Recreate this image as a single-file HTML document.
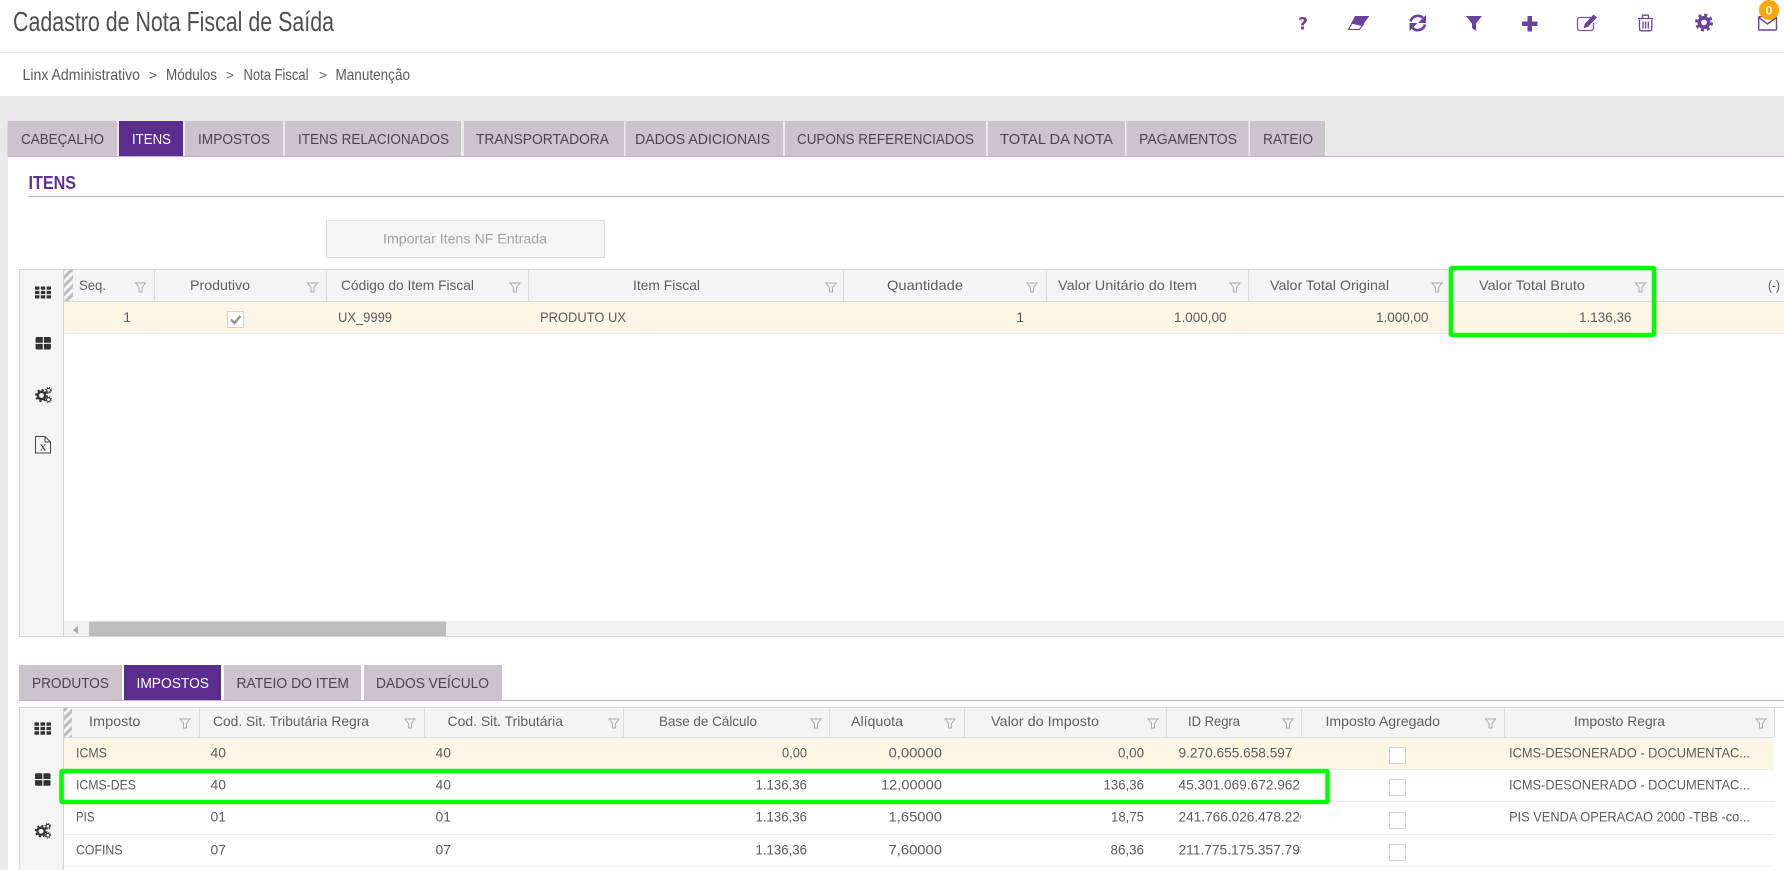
<!DOCTYPE html>
<html lang="pt"><head><meta charset="utf-8"><title>Cadastro de Nota Fiscal de Saída</title>
<style>
html,body{margin:0;padding:0;width:1784px;height:870px;overflow:hidden;background:#fff}
svg{display:block}
text{font-family:"Liberation Sans",sans-serif;fill:#5c5c5c;font-size:14px}
.t{font-size:15px;fill:#4a464e}
.bc{font-size:16px;fill:#5a5a5a}
.h{font-size:14px;fill:#5f5f5f}
.ic{fill:#6a439e}
</style></head><body>
<svg xmlns="http://www.w3.org/2000/svg" width="1784" height="870" viewBox="0 0 1784 870">
<defs>
<pattern id="st" width="6" height="6" patternUnits="userSpaceOnUse" patternTransform="rotate(-45)"><rect width="6" height="6" fill="#f4f4f4"/><rect width="6" height="3" fill="#bdbdbd"/></pattern>
<symbol id="f" viewBox="0 0 13 13" overflow="visible"><path d="M1.500 2H11.500L8 6.500V11H5V6.500Z" fill="none" stroke="#ababab" stroke-width="1"/></symbol>
<symbol id="grid" viewBox="0 0 16 12"><path fill="#333" d="M0 0h4.400v3.300H0zM5.800 0h4.400v3.300H5.800zM11.600 0H16v3.300h-4.400zM0 4.400h4.400v3.200H0zM5.800 4.400h4.400v3.200H5.800zM11.600 4.400H16v3.200h-4.400zM0 8.700h4.400V12H0zM5.800 8.700h4.400V12H5.800zM11.600 8.700H16V12h-4.400z"/></symbol>
<symbol id="sq" viewBox="0 0 16 13"><path fill="#333" d="M1 0h6.500v6H0V1zM8.700 0H15l1 1v5H8.700zM0 7.200h7.500V13H1l-1-1zM8.700 7.200H16V12l-1 1H8.700z"/></symbol>
<symbol id="gears" viewBox="0 0 17 16"><g fill="none" stroke="#333"><circle cx="6.500" cy="8.500" r="3.700" stroke-width="2.400"/><circle cx="6.500" cy="8.500" r="5.600" stroke-width="1.800" stroke-dasharray="2.200 2.200"/><circle cx="13.500" cy="3.300" r="1.900" stroke-width="1"/><circle cx="13.500" cy="3.300" r="2.900" stroke-width="1" stroke-dasharray="1.100 1.200"/><circle cx="13.500" cy="12.600" r="1.900" stroke-width="1"/><circle cx="13.500" cy="12.600" r="2.900" stroke-width="1" stroke-dasharray="1.100 1.200"/></g></symbol>
<clipPath id="idc"><rect x="1170" y="737" width="131" height="130"/></clipPath>
</defs>

<!-- page background -->
<rect x="0" y="96" width="1784" height="774" fill="#e9e9e9"/>
<rect x="0" y="52" width="1784" height="1" fill="#eeeeee"/>
<rect x="8" y="157" width="1776" height="713" fill="#fff"/>

<!-- title -->
<text x="13" y="31" style="font-size:27.500px;fill:#505050" textLength="321" lengthAdjust="spacingAndGlyphs">Cadastro de Nota Fiscal de Saída</text>

<!-- breadcrumb -->
<text class="bc" x="22.500" y="80" textLength="117.500" lengthAdjust="spacingAndGlyphs">Linx Administrativo</text>
<text class="bc" x="149" y="79.500" textLength="8" lengthAdjust="spacingAndGlyphs" style="font-size:13px">&gt;</text>
<text class="bc" x="166" y="80" textLength="51" lengthAdjust="spacingAndGlyphs">Módulos</text>
<text class="bc" x="226" y="79.500" textLength="8" lengthAdjust="spacingAndGlyphs" style="font-size:13px">&gt;</text>
<text class="bc" x="243.500" y="80" textLength="65" lengthAdjust="spacingAndGlyphs">Nota Fiscal</text>
<text class="bc" x="319" y="79.500" textLength="8" lengthAdjust="spacingAndGlyphs" style="font-size:13px">&gt;</text>
<text class="bc" x="335.500" y="80" textLength="74.500" lengthAdjust="spacingAndGlyphs">Manutenção</text>

<!-- toolbar icons -->
<text x="1303" y="29.500" text-anchor="middle" style="font-family:'DejaVu Sans',sans-serif;font-size:17px;font-weight:bold;fill:#6a439e">?</text>
<path class="ic" d="M1355 16H1369.300L1362 26L1351 23.500Z"/>
<path d="M1352.500 22.500L1348.500 29.500H1359.500L1364 23.500" fill="none" stroke="#6a439e" stroke-width="1.100"/>
<g fill="none" stroke="#6a439e" stroke-width="2.700">
<path d="M1410.500 21.500A7.500 7.500 0 0 1 1423 18"/>
<path d="M1425 24.500A7.500 7.500 0 0 1 1412.500 28"/>
</g>
<path class="ic" d="M1426 15V23H1418ZM1409.500 31V23H1417.500Z"/>
<path class="ic" d="M1466 16H1482L1476 23.500V31L1472 28V23.500Z"/>
<path class="ic" d="M1527.500 16h4.500v5.500h5.500v4.500H1532v5.500h-4.500V26H1522v-4.500h5.500z"/>
<path d="M1591 17.500H1580a2.500 2.500 0 0 0-2.500 2.500v8a2.500 2.500 0 0 0 2.500 2.500h11a2.500 2.500 0 0 0 2.500-2.500v-5" fill="none" stroke="#7a58a8" stroke-width="1.300"/>
<path class="ic" d="M1593.500 14.500L1597 17.500L1588 26.800L1583.500 28.200L1584.800 23.800Z"/>
<g fill="none" stroke="#6a439e" stroke-width="1.300">
<path d="M1639.500 19.500V29a1.800 1.800 0 0 0 1.800 1.800H1650a1.800 1.800 0 0 0 1.800-1.800V19.500"/>
<path d="M1638 18.500H1653M1642.500 18V15.200H1648.500V18"/>
<path d="M1643 21.500V28.500M1645.600 21.500V28.500M1648.300 21.500V28.500"/>
</g>
<g fill="none" stroke="#6a439e">
<circle cx="1704" cy="22.500" r="4.700" stroke-width="3.600"/>
<circle cx="1704" cy="22.500" r="7.600" stroke-width="2.800" stroke-dasharray="3 2.970"/>
</g>
<g fill="none" stroke="#6a439e" stroke-width="1.400">
<rect x="1758.700" y="16.700" width="17.800" height="13.300" rx="1"/>
<path d="M1758.700 17.500L1767.500 24L1776.500 17.500"/>
</g>
<circle cx="1769" cy="10" r="10" fill="#ffa500"/>
<text x="1769" y="14.500" text-anchor="middle" style="font-size:12px;font-weight:bold;fill:#fff">0</text>

<!-- main tabs -->
<g fill="#cbc4cf">
<rect x="7.500" y="121" width="109.500" height="36"/>
<rect x="119" y="121" width="64" height="36" fill="#5b2d8e"/>
<rect x="185" y="121" width="98" height="36"/>
<rect x="285" y="121" width="176" height="36"/>
<rect x="464" y="121" width="160" height="36"/>
<rect x="625.500" y="121" width="157.500" height="36"/>
<rect x="785" y="121" width="201" height="36"/>
<rect x="988" y="121" width="137" height="36"/>
<rect x="1126.500" y="121" width="122" height="36"/>
<rect x="1250" y="121" width="75" height="36"/>
</g>
<rect x="8" y="156" width="1776" height="1" fill="#c3b0dc"/>
<text class="t" x="21" y="144" textLength="83" lengthAdjust="spacingAndGlyphs">CABEÇALHO</text>
<text class="t" x="132" y="144" textLength="39" lengthAdjust="spacingAndGlyphs" style="fill:#fff">ITENS</text>
<text class="t" x="198" y="144" textLength="72" lengthAdjust="spacingAndGlyphs">IMPOSTOS</text>
<text class="t" x="298" y="144" textLength="151" lengthAdjust="spacingAndGlyphs">ITENS RELACIONADOS</text>
<text class="t" x="476" y="144" textLength="133" lengthAdjust="spacingAndGlyphs">TRANSPORTADORA</text>
<text class="t" x="635" y="144" textLength="135" lengthAdjust="spacingAndGlyphs">DADOS ADICIONAIS</text>
<text class="t" x="797" y="144" textLength="177" lengthAdjust="spacingAndGlyphs">CUPONS REFERENCIADOS</text>
<text class="t" x="1000" y="144" textLength="113" lengthAdjust="spacingAndGlyphs">TOTAL DA NOTA</text>
<text class="t" x="1139" y="144" textLength="98" lengthAdjust="spacingAndGlyphs">PAGAMENTOS</text>
<text class="t" x="1263" y="144" textLength="50" lengthAdjust="spacingAndGlyphs">RATEIO</text>

<!-- section title -->
<text x="28.500" y="189" textLength="47.500" lengthAdjust="spacingAndGlyphs" style="font-size:18px;fill:#5f3393;font-weight:bold">ITENS</text>
<rect x="28" y="196" width="1756" height="1" fill="#c3b0dc"/>

<!-- import button -->
<rect x="326.500" y="220.500" width="278" height="37" fill="#f5f5f5" stroke="#dedede"/>
<text x="383" y="243.500" textLength="164" lengthAdjust="spacingAndGlyphs" style="fill:#a3a3a3;font-size:14px">Importar Itens NF Entrada</text>

<!-- upper grid -->
<rect x="19.500" y="269.500" width="1765" height="367" fill="#fff" stroke="#d8d8d8"/>
<rect x="20" y="270" width="43.500" height="366" fill="#f5f5f5"/>
<rect x="63" y="270" width="1" height="366" fill="#d4d4d4"/>
<rect x="64" y="270" width="1720" height="31" fill="#f4f4f4"/>
<rect x="64" y="270" width="9" height="31" fill="url(#st)"/>
<rect x="64" y="301" width="1720" height="1" fill="#dcdcdc"/>
<rect x="64" y="302" width="1720" height="31" fill="#fdf5e6"/>
<rect x="64" y="333" width="1720" height="1" fill="#eeeeee"/>
<g fill="#dcdcdc">
<rect x="154" y="270" width="1" height="31"/><rect x="326" y="270" width="1" height="31"/><rect x="528" y="270" width="1" height="31"/><rect x="843" y="270" width="1" height="31"/><rect x="1046" y="270" width="1" height="31"/><rect x="1248" y="270" width="1" height="31"/><rect x="1450" y="270" width="1" height="31"/>
</g>
<use href="#grid" x="35" y="286.500" width="16" height="12"/>
<use href="#sq" x="35.500" y="337" width="15.500" height="12.500"/>
<use href="#gears" x="35" y="387" width="17" height="16"/>
<g fill="none" stroke="#444" stroke-width="1">
<path d="M35.500 436.500H45L50.500 442V453H35.500Z"/><path d="M45 436.500V442H50.500"/>
</g>
<text x="43" y="450.500" text-anchor="middle" style="font-family:'Liberation Serif',serif;font-size:13px;fill:#333">x</text>

<text class="h" x="79" y="290" textLength="27" lengthAdjust="spacingAndGlyphs">Seq.</text>
<text class="h" x="190" y="290" textLength="60" lengthAdjust="spacingAndGlyphs">Produtivo</text>
<text class="h" x="341" y="290" textLength="133" lengthAdjust="spacingAndGlyphs">Código do Item Fiscal</text>
<text class="h" x="633" y="290" textLength="67" lengthAdjust="spacingAndGlyphs">Item Fiscal</text>
<text class="h" x="887" y="290" textLength="76" lengthAdjust="spacingAndGlyphs">Quantidade</text>
<text class="h" x="1058" y="290" textLength="139" lengthAdjust="spacingAndGlyphs">Valor Unitário do Item</text>
<text class="h" x="1270" y="290" textLength="119" lengthAdjust="spacingAndGlyphs">Valor Total Original</text>
<text class="h" x="1479" y="290" textLength="106" lengthAdjust="spacingAndGlyphs">Valor Total Bruto</text>
<text class="h" x="1768" y="290" textLength="12" lengthAdjust="spacingAndGlyphs">(-)</text>
<use href="#f" x="134" y="281" width="13" height="13"/>
<use href="#f" x="306" y="281" width="13" height="13"/>
<use href="#f" x="508.500" y="281" width="13" height="13"/>
<use href="#f" x="824.500" y="281" width="13" height="13"/>
<use href="#f" x="1025.500" y="281" width="13" height="13"/>
<use href="#f" x="1228.500" y="281" width="13" height="13"/>
<use href="#f" x="1430.500" y="281" width="13" height="13"/>
<use href="#f" x="1634" y="281" width="13" height="13"/>

<text x="131" y="322" text-anchor="end">1</text>
<rect x="227.500" y="311.500" width="16" height="16" fill="#fff" stroke="#d0d0d0"/>
<path d="M231 319.500L234.500 323L240.500 316" fill="none" stroke="#8f8f8f" stroke-width="2.400"/>
<text x="338" y="322" textLength="54" lengthAdjust="spacingAndGlyphs">UX_9999</text>
<text x="540" y="322" textLength="86" lengthAdjust="spacingAndGlyphs">PRODUTO UX</text>
<text x="1024" y="322" text-anchor="end">1</text>
<text x="1174" y="322" textLength="52.500" lengthAdjust="spacingAndGlyphs">1.000,00</text>
<text x="1376" y="322" textLength="52.500" lengthAdjust="spacingAndGlyphs">1.000,00</text>
<text x="1579" y="322" textLength="52.500" lengthAdjust="spacingAndGlyphs">1.136,36</text>

<!-- scrollbar -->
<rect x="64" y="621" width="1720" height="15" fill="#f0f0f0"/>
<rect x="89" y="621.500" width="357" height="14.500" fill="#bdbdbd"/>
<path d="M73 630L78 626V634Z" fill="#a8a8a8"/>

<!-- green box upper -->
<rect x="1451" y="268" width="203" height="67" fill="none" stroke="#00ff00" stroke-width="4.500" rx="1"/>

<!-- lower tabs -->
<g fill="#cbc4cf">
<rect x="19" y="665" width="103" height="35"/>
<rect x="124" y="665" width="97" height="35" fill="#5b2d8e"/>
<rect x="224" y="665" width="137" height="35"/>
<rect x="364" y="665" width="138" height="35"/>
</g>
<rect x="19" y="700" width="1765" height="1" fill="#c3b0dc"/>
<text class="t" x="32" y="688" textLength="77" lengthAdjust="spacingAndGlyphs">PRODUTOS</text>
<text class="t" x="136.500" y="688" textLength="72.500" lengthAdjust="spacingAndGlyphs" style="fill:#fff">IMPOSTOS</text>
<text class="t" x="236.500" y="688" textLength="112.500" lengthAdjust="spacingAndGlyphs">RATEIO DO ITEM</text>
<text class="t" x="376" y="688" textLength="113" lengthAdjust="spacingAndGlyphs">DADOS VEÍCULO</text>

<!-- lower grid -->
<rect x="19" y="707" width="1765" height="1" fill="#d8d8d8"/>
<rect x="19" y="708" width="1" height="162" fill="#d8d8d8"/>
<rect x="20" y="708" width="43.500" height="162" fill="#f5f5f5"/>
<rect x="63" y="708" width="1" height="162" fill="#d4d4d4"/>
<rect x="64" y="708" width="1710" height="29" fill="#f4f4f4"/>
<rect x="64" y="708" width="8" height="29" fill="url(#st)"/>
<rect x="64" y="737" width="1710" height="1" fill="#dcdcdc"/>
<rect x="64" y="738" width="1710" height="31" fill="#fdf5e6"/>
<g fill="#ececec">
<rect x="64" y="769" width="1710" height="1"/><rect x="64" y="801" width="1710" height="1"/><rect x="64" y="834" width="1710" height="1"/><rect x="64" y="866" width="1710" height="1"/>
</g>
<g fill="#dcdcdc">
<rect x="199" y="708" width="1" height="29"/><rect x="424" y="708" width="1" height="29"/><rect x="623" y="708" width="1" height="29"/><rect x="829" y="708" width="1" height="29"/><rect x="964" y="708" width="1" height="29"/><rect x="1166" y="708" width="1" height="29"/><rect x="1301" y="708" width="1" height="29"/><rect x="1504" y="708" width="1" height="29"/><rect x="1774" y="708" width="1" height="29"/>
</g>
<use href="#grid" x="34.500" y="722" width="16.500" height="13"/>
<use href="#sq" x="35" y="773" width="15.500" height="13"/>
<use href="#gears" x="34.500" y="823" width="17" height="15.500"/>

<text class="h" x="89" y="726" textLength="51.500" lengthAdjust="spacingAndGlyphs">Imposto</text>
<text class="h" x="213" y="726" textLength="156" lengthAdjust="spacingAndGlyphs">Cod. Sit. Tributária Regra</text>
<text class="h" x="447.500" y="726" textLength="115.500" lengthAdjust="spacingAndGlyphs">Cod. Sit. Tributária</text>
<text class="h" x="659" y="726" textLength="98" lengthAdjust="spacingAndGlyphs">Base de Cálculo</text>
<text class="h" x="851" y="726" textLength="52" lengthAdjust="spacingAndGlyphs">Alíquota</text>
<text class="h" x="991" y="726" textLength="108" lengthAdjust="spacingAndGlyphs">Valor do Imposto</text>
<text class="h" x="1188" y="726" textLength="52" lengthAdjust="spacingAndGlyphs">ID Regra</text>
<text class="h" x="1325.500" y="726" textLength="114.500" lengthAdjust="spacingAndGlyphs">Imposto Agregado</text>
<text class="h" x="1574" y="726" textLength="91" lengthAdjust="spacingAndGlyphs">Imposto Regra</text>
<use href="#f" x="178.500" y="717" width="13" height="13"/>
<use href="#f" x="403.500" y="717" width="13" height="13"/>
<use href="#f" x="607.500" y="717" width="13" height="13"/>
<use href="#f" x="809.500" y="717" width="13" height="13"/>
<use href="#f" x="943.500" y="717" width="13" height="13"/>
<use href="#f" x="1146.500" y="717" width="13" height="13"/>
<use href="#f" x="1281.500" y="717" width="13" height="13"/>
<use href="#f" x="1484" y="717" width="13" height="13"/>
<use href="#f" x="1754.500" y="717" width="13" height="13"/>

<!-- rows -->
<text x="76" y="757.500" textLength="31" lengthAdjust="spacingAndGlyphs">ICMS</text>
<text x="210.500" y="757.500" textLength="15.500" lengthAdjust="spacingAndGlyphs">40</text>
<text x="435.500" y="757.500" textLength="15.500" lengthAdjust="spacingAndGlyphs">40</text>
<text x="782" y="757.500" textLength="25" lengthAdjust="spacingAndGlyphs">0,00</text>
<text x="888.500" y="757.500" textLength="53.500" lengthAdjust="spacingAndGlyphs">0,00000</text>
<text x="1118" y="757.500" textLength="26" lengthAdjust="spacingAndGlyphs">0,00</text>
<text x="1178.500" y="757.500" textLength="114" lengthAdjust="spacingAndGlyphs">9.270.655.658.597</text>
<rect x="1389.500" y="747.500" width="16" height="16" fill="#fff" stroke="#d4d4d4"/>
<text x="1509" y="757.500" textLength="241" lengthAdjust="spacingAndGlyphs">ICMS-DESONERADO - DOCUMENTAC...</text>

<text x="76" y="789.500" textLength="60" lengthAdjust="spacingAndGlyphs">ICMS-DES</text>
<text x="210.500" y="789.500" textLength="15.500" lengthAdjust="spacingAndGlyphs">40</text>
<text x="435.500" y="789.500" textLength="15.500" lengthAdjust="spacingAndGlyphs">40</text>
<text x="755.500" y="789.500" textLength="51.500" lengthAdjust="spacingAndGlyphs">1.136,36</text>
<text x="881" y="789.500" textLength="61" lengthAdjust="spacingAndGlyphs">12,00000</text>
<text x="1103.500" y="789.500" textLength="40.500" lengthAdjust="spacingAndGlyphs">136,36</text>
<text x="1178.500" y="789.500" textLength="121.500" lengthAdjust="spacingAndGlyphs">45.301.069.672.962</text>
<rect x="1389.500" y="779.500" width="16" height="16" fill="#fff" stroke="#d4d4d4"/>
<text x="1509" y="789.500" textLength="241" lengthAdjust="spacingAndGlyphs">ICMS-DESONERADO - DOCUMENTAC...</text>

<text x="76" y="821.500" textLength="18.500" lengthAdjust="spacingAndGlyphs">PIS</text>
<text x="210.500" y="821.500" textLength="15.500" lengthAdjust="spacingAndGlyphs">01</text>
<text x="435.500" y="821.500" textLength="15.500" lengthAdjust="spacingAndGlyphs">01</text>
<text x="755.500" y="821.500" textLength="51.500" lengthAdjust="spacingAndGlyphs">1.136,36</text>
<text x="888.500" y="821.500" textLength="53.500" lengthAdjust="spacingAndGlyphs">1,65000</text>
<text x="1111" y="821.500" textLength="33" lengthAdjust="spacingAndGlyphs">18,75</text>
<text x="1178.500" y="821.500" textLength="129" lengthAdjust="spacingAndGlyphs" clip-path="url(#idc)">241.766.026.478.220</text>
<rect x="1389.500" y="812.500" width="16" height="16" fill="#fff" stroke="#d4d4d4"/>
<text x="1509" y="821.500" textLength="241" lengthAdjust="spacingAndGlyphs">PIS VENDA OPERACAO 2000 -TBB -co...</text>

<text x="76" y="854.500" textLength="46.500" lengthAdjust="spacingAndGlyphs">COFINS</text>
<text x="210.500" y="854.500" textLength="15.500" lengthAdjust="spacingAndGlyphs">07</text>
<text x="435.500" y="854.500" textLength="15.500" lengthAdjust="spacingAndGlyphs">07</text>
<text x="755.500" y="854.500" textLength="51.500" lengthAdjust="spacingAndGlyphs">1.136,36</text>
<text x="888.500" y="854.500" textLength="53.500" lengthAdjust="spacingAndGlyphs">7,60000</text>
<text x="1110.500" y="854.500" textLength="33.500" lengthAdjust="spacingAndGlyphs">86,36</text>
<text x="1178.500" y="854.500" textLength="129" lengthAdjust="spacingAndGlyphs" clip-path="url(#idc)">211.775.175.357.798</text>
<rect x="1389.500" y="844.500" width="16" height="16" fill="#fff" stroke="#d4d4d4"/>

<!-- green box lower -->
<rect x="61.500" y="771" width="1266" height="31" fill="none" stroke="#00ff00" stroke-width="4.500" rx="1"/>
</svg>
</body></html>
